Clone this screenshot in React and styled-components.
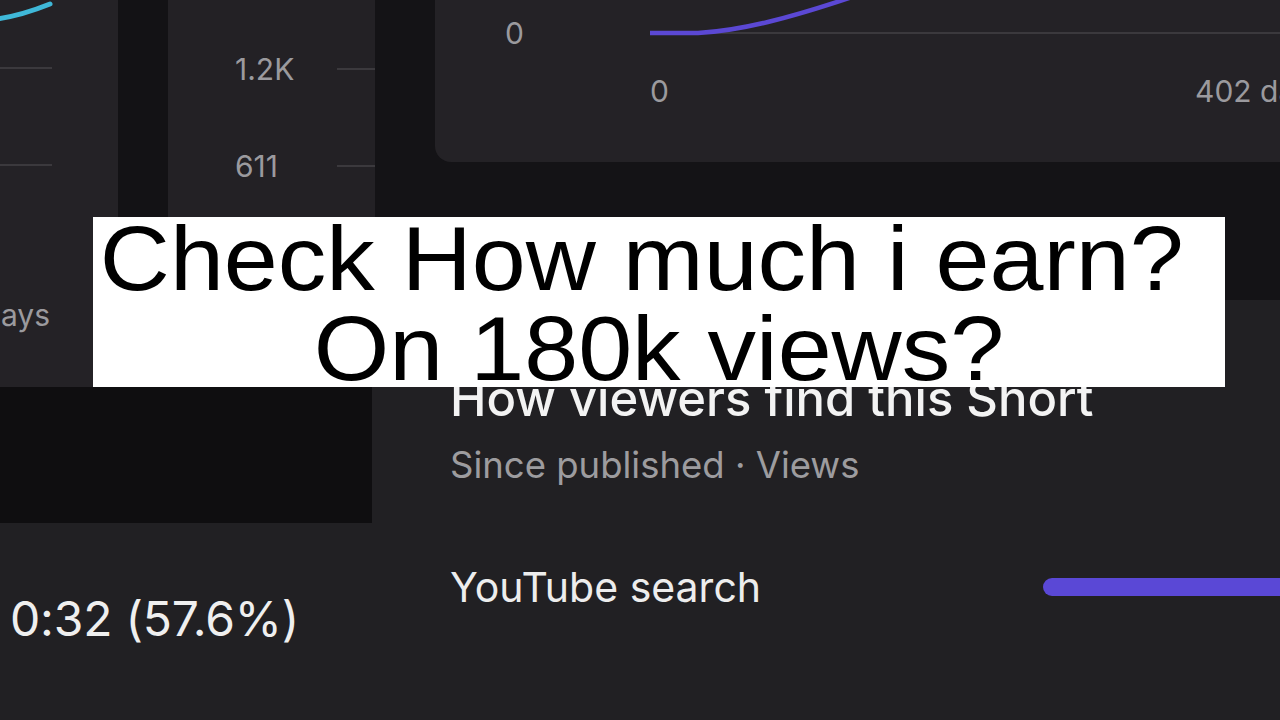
import React from "react";
import styled, { createGlobalStyle } from "styled-components";

const GlobalStyle = createGlobalStyle`
  html, body {
    margin: 0;
    padding: 0;
    background: #141316;
  }
`;

const Screen = styled.div`
  position: relative;
  width: 1280px;
  height: 720px;
  overflow: hidden;
  background: #212023;
  display: grid;
  grid-template-columns: 375px 1fr;
  font-family: Inter, "Noto Sans", sans-serif;
  color: #f1f1f1;
`;

const LeftColumn = styled.div`
  display: flex;
  flex-direction: column;
  min-width: 0;
`;

const ChartsStrip = styled.div`
  height: 387px;
  display: flex;
  gap: 50px;
  background: #131215;
`;

const TrendPanel = styled.div`
  width: 118px;
  flex-shrink: 0;
  background: #242226;
  overflow: hidden;
  display: flex;
  flex-direction: column;
`;

const AxisLabel = styled.div`
  font-size: 30px;
  line-height: 36px;
  color: #9b9a9e;
  white-space: nowrap;
`;

const DayLabelWrap = styled.div`
  width: 50px;
  display: flex;
  justify-content: flex-end;
  margin-top: 37px;
`;

const AxisPanel = styled.div`
  width: 207px;
  flex-shrink: 0;
  background: #232125;
  padding-top: 20px;
  display: flex;
  flex-direction: column;
`;

const TickRow = styled.div`
  height: 97px;
  display: flex;
  align-items: center;
  padding-left: 67px;
`;

const TickLine = styled.div`
  margin-left: auto;
  width: 38px;
  height: 2px;
  background: #3b393d;
`;

const Thumbnail = styled.div`
  height: 136px;
  width: 372px;
  background: #0f0e10;
`;

const RetentionValue = styled.div`
  margin-top: 67px;
  padding-left: 10px;
  font-size: 48px;
  line-height: 58px;
  letter-spacing: -0.2px;
  color: #efefef;
  white-space: nowrap;
`;

const RightColumn = styled.div`
  display: flex;
  flex-direction: column;
  min-width: 0;
`;

const TopBand = styled.div`
  height: 300px;
  box-sizing: border-box;
  padding-left: 60px;
  background: #141316;
`;

const ChartCard = styled.div`
  height: 162px;
  background: #242226;
  border-bottom-left-radius: 16px;
  overflow: hidden;
`;

const PlotRow = styled.div`
  height: 66px;
  display: flex;
  align-items: center;
`;

const YTickCol = styled.div`
  width: 215px;
  flex-shrink: 0;
  padding-left: 70px;
  box-sizing: border-box;
`;

const PlotSvg = styled.svg`
  flex: 1;
  height: 66px;
  display: block;
`;

const XAxisRow = styled.div`
  margin-top: 7px;
  display: grid;
  grid-template-columns: 215px 545px auto;
`;

const Sources = styled.div`
  padding: 71px 0 0 75px;
`;

const SourceTitle = styled.div`
  font-size: 49px;
  line-height: 56px;
  font-weight: 500;
  color: #f3f3f3;
  white-space: nowrap;
`;

const SourceMeta = styled.div`
  margin-top: 16px;
  font-size: 36.5px;
  line-height: 44px;
  color: #9d9c9f;
  white-space: nowrap;
`;

const SourceRow = styled.div`
  margin-top: 76px;
  height: 48px;
  display: grid;
  grid-template-columns: 593px 1fr;
  align-items: center;
`;

const SourceName = styled.div`
  font-size: 41px;
  line-height: 48px;
  color: #ededed;
  white-space: nowrap;
`;

const SourceBar = styled.div`
  height: 18px;
  width: calc(100% + 30px);
  border-radius: 9px;
  background: #5a48d6;
`;

const Caption = styled.div`
  position: absolute;
  left: 93px;
  top: 217px;
  width: 1132px;
  height: 170px;
  background: #ffffff;
  color: #000000;
  font-family: "Liberation Sans", Arial, sans-serif;
  font-size: 90px;
  line-height: 90px;
  text-align: center;
  white-space: nowrap;
`;

const CaptionText = styled.div`
  margin-top: -3px;
`;

const CaptionLine = styled.span`
  display: block;
  padding-right: ${(p) => p.$trail || 0}px;
  transform: scaleX(1.078);
`;

export default function App() {
  return (
    <>
      <GlobalStyle />
      <Screen>
        <LeftColumn>
          <ChartsStrip>
            <TrendPanel>
              <svg width="118" height="260" viewBox="0 0 118 260">
                <line x1="0" y1="68" x2="52" y2="68" stroke="#3b393d" strokeWidth="2" />
                <line x1="0" y1="165" x2="52" y2="165" stroke="#3b393d" strokeWidth="2" />
                <path
                  d="M-4 19 C 12 17, 30 12, 50 4"
                  fill="none"
                  stroke="#3fb8d8"
                  strokeWidth="5"
                  strokeLinecap="round"
                />
              </svg>
              <DayLabelWrap>
                <AxisLabel>402 days</AxisLabel>
              </DayLabelWrap>
            </TrendPanel>
            <AxisPanel>
              <TickRow>
                <AxisLabel>1.2K</AxisLabel>
                <TickLine />
              </TickRow>
              <TickRow>
                <AxisLabel>611</AxisLabel>
                <TickLine />
              </TickRow>
            </AxisPanel>
          </ChartsStrip>
          <Thumbnail />
          <RetentionValue>0:32 (57.6%)</RetentionValue>
        </LeftColumn>

        <RightColumn>
          <TopBand>
            <ChartCard>
              <PlotRow>
                <YTickCol>
                  <AxisLabel>0</AxisLabel>
                </YTickCol>
                <PlotSvg viewBox="0 0 630 66" preserveAspectRatio="none">
                  <line x1="0" y1="33" x2="630" y2="33" stroke="#3b393d" strokeWidth="2" />
                  <path
                    d="M0 33 L48 33 C 90 31, 140 18, 205 -4"
                    fill="none"
                    stroke="#5b48d4"
                    strokeWidth="4.5"
                    strokeLinecap="round"
                  />
                </PlotSvg>
              </PlotRow>
              <XAxisRow>
                <span />
                <AxisLabel>0</AxisLabel>
                <AxisLabel>402 days</AxisLabel>
              </XAxisRow>
            </ChartCard>
          </TopBand>
          <Sources>
            <SourceTitle>How viewers find this Short</SourceTitle>
            <SourceMeta>Since published · Views</SourceMeta>
            <SourceRow>
              <SourceName>YouTube search</SourceName>
              <SourceBar />
            </SourceRow>
          </Sources>
        </RightColumn>

        <Caption>
          <CaptionText>
            <CaptionLine $trail={32}>Check How much i earn?</CaptionLine>
            <CaptionLine>On 180k views?</CaptionLine>
          </CaptionText>
        </Caption>
      </Screen>
    </>
  );
}
